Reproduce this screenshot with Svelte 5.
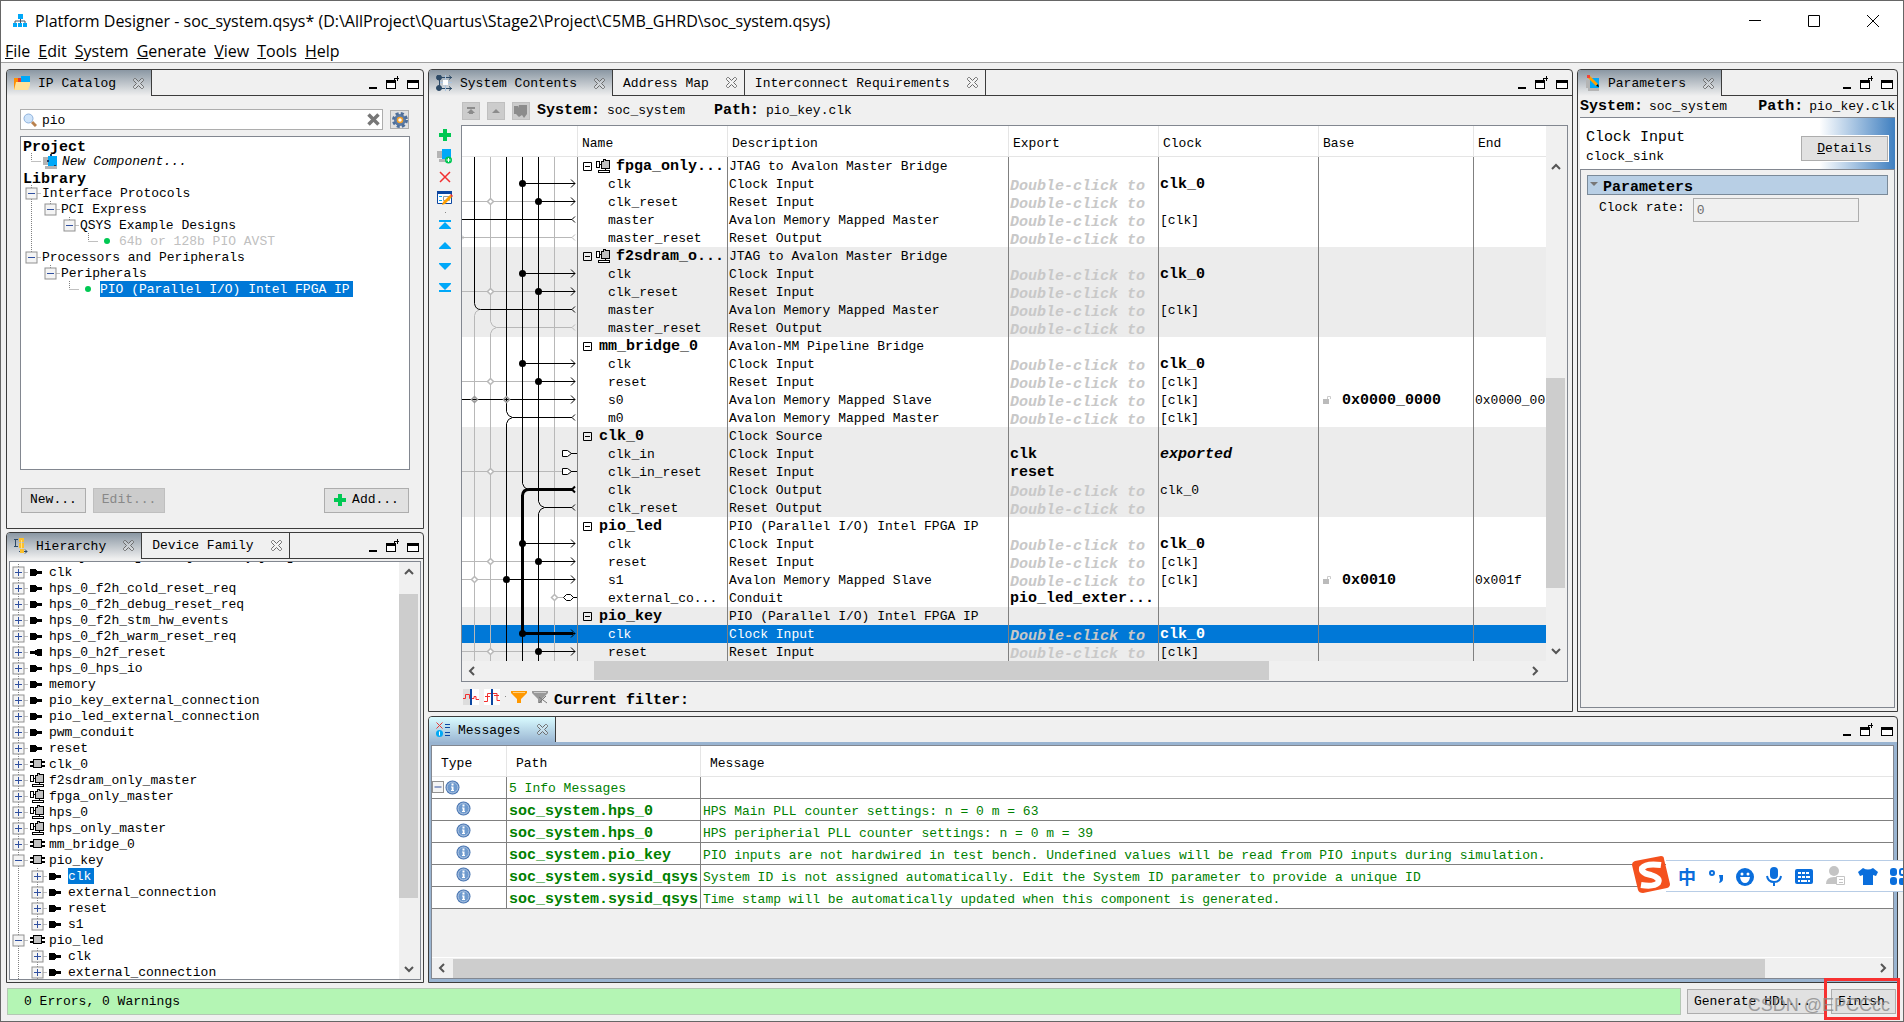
<script>
  const menus = ["File", "Edit", "System", "Generate", "View", "Tools", "Help"];

  let search = $state("pio");
  let clockRate = $state("0");

  // depth: nesting, toggle: + / - / none, last: end of its branch, through: depths whose guide runs on
  const catalog = [
    { label: "Project", heading: true },
    { label: "New Component...", depth: 0, icon: "component", last: true, italic: true },
    { label: "Library", heading: true },
    { label: "Interface Protocols", depth: 0, toggle: "-" },
    { label: "PCI Express", depth: 1, toggle: "-", last: true, through: [0] },
    { label: "QSYS Example Designs", depth: 2, toggle: "-", last: true, through: [0] },
    { label: "64b or 128b PIO AVST", depth: 3, icon: "dot", last: true, through: [0], dim: true },
    { label: "Processors and Peripherals", depth: 0, toggle: "-", last: true },
    { label: "Peripherals", depth: 1, toggle: "-", last: true },
    { label: "PIO (Parallel I/O) Intel FPGA IP", depth: 2, icon: "dot", last: true, selected: true },
  ];

  const node = (label, icon = "port", depth = 0, toggle = "+") => ({
    label,
    icon,
    depth,
    toggle,
    through: depth ? [0] : [],
  });

  const hierarchy = [
    node("clk"),
    node("hps_0_f2h_cold_reset_req"),
    node("hps_0_f2h_debug_reset_req"),
    node("hps_0_f2h_stm_hw_events"),
    node("hps_0_f2h_warm_reset_req"),
    node("hps_0_h2f_reset", "portout"),
    node("hps_0_hps_io"),
    node("memory"),
    node("pio_key_external_connection"),
    node("pio_led_external_connection"),
    node("pwm_conduit"),
    node("reset"),
    node("clk_0", "chip"),
    node("f2sdram_only_master", "subsystem"),
    node("fpga_only_master", "subsystem"),
    node("hps_0", "subsystem"),
    node("hps_only_master", "subsystem"),
    node("mm_bridge_0", "chip"),
    node("pio_key", "chip", 0, "-"),
    { ...node("clk", "port", 1), selected: true },
    node("external_connection", "port", 1),
    node("reset", "port", 1),
    { ...node("s1", "port", 1), last: true },
    node("pio_led", "chip", 0, "-"),
    node("clk", "port", 1),
    node("external_connection", "port", 1),
  ];

  const D = "Double-click to";
  const modules = [
    {
      name: "fpga_only...",
      desc: "JTAG to Avalon Master Bridge",
      sub: true,
      ports: [
        ["clk", "Clock Input", D, "clk_0"],
        ["clk_reset", "Reset Input", D],
        ["master", "Avalon Memory Mapped Master", D, "[clk]"],
        ["master_reset", "Reset Output", D],
      ],
    },
    {
      name: "f2sdram_o...",
      desc: "JTAG to Avalon Master Bridge",
      sub: true,
      ports: [
        ["clk", "Clock Input", D, "clk_0"],
        ["clk_reset", "Reset Input", D],
        ["master", "Avalon Memory Mapped Master", D, "[clk]"],
        ["master_reset", "Reset Output", D],
      ],
    },
    {
      name: "mm_bridge_0",
      desc: "Avalon-MM Pipeline Bridge",
      ports: [
        ["clk", "Clock Input", D, "clk_0"],
        ["reset", "Reset Input", D, "[clk]"],
        ["s0", "Avalon Memory Mapped Slave", D, "[clk]", "0x0000_0000", "0x0000_00"],
        ["m0", "Avalon Memory Mapped Master", D, "[clk]"],
      ],
    },
    {
      name: "clk_0",
      desc: "Clock Source",
      ports: [
        ["clk_in", "Clock Input", "clk", "exported"],
        ["clk_in_reset", "Reset Input", "reset"],
        ["clk", "Clock Output", D, "clk_0", "", "", true],
        ["clk_reset", "Reset Output", D],
      ],
    },
    {
      name: "pio_led",
      desc: "PIO (Parallel I/O) Intel FPGA IP",
      ports: [
        ["clk", "Clock Input", D, "clk_0"],
        ["reset", "Reset Input", D, "[clk]"],
        ["s1", "Avalon Memory Mapped Slave", D, "[clk]", "0x0010", "0x001f"],
        ["external_co...", "Conduit", "pio_led_exter..."],
      ],
    },
    {
      name: "pio_key",
      desc: "PIO (Parallel I/O) Intel FPGA IP",
      ports: [
        ["clk", "Clock Input", D, "clk_0"],
        ["reset", "Reset Input", D, "[clk]"],
      ],
    },
  ];

  const messages = [
    ["soc_system.hps_0", "HPS Main PLL counter settings: n = 0 m = 63"],
    ["soc_system.hps_0", "HPS peripherial PLL counter settings: n = 0 m = 39"],
    ["soc_system.pio_key", "PIO inputs are not hardwired in test bench. Undefined values will be read from PIO inputs during simulation."],
    ["soc_system.sysid_qsys", "System ID is not assigned automatically. Edit the System ID parameter to provide a unique ID"],
    ["soc_system.sysid_qsys", "Time stamp will be automatically updated when this component is generated."],
  ];

  // y of the wire in table row i
  const wy = (i) => i * 18 + 8.5;
  const clkRows = [1, 6, 11, 21];
  const resetRows = [2, 7, 12, 22, 27];
</script>

{#snippet icon(name)}
  {#if name === "component"}
    <svg width="16" height="15" viewBox="0 0 16 15">
      <path d="M0 3h6v8H0z" fill="#b4b4b4" />
      <path d="M2 12h12v3H2z" fill="#b4b4b4" />
      <path d="M5 2h2V0h2v2h5v10H5z" fill="#00a8f8" />
      <path d="M7 0h2v2H7zM4 6h2v2H4zM11 11h2v1h-2z" fill="#1a3a66" />
    </svg>
  {:else if name === "dot"}
    <svg width="16" height="16" viewBox="0 0 16 16"><circle cx="7" cy="8" r="3" fill="#00c853" /></svg>
  {:else if name === "port"}
    <svg width="16" height="10" viewBox="0 0 16 10" shape-rendering="crispEdges"><path d="M0 2h5l1 1h1v1h5v3H7v1H6L5 9H0z" /></svg>
  {:else if name === "portout"}
    <svg width="16" height="10" viewBox="0 0 16 10" shape-rendering="crispEdges"><path d="M12 2H7L6 3H5v1H0v3h5v1h1l1 1h5z" /></svg>
  {:else if name === "chip"}
    <svg width="16" height="10" viewBox="0 0 16 10" shape-rendering="crispEdges">
      <path d="M0 2h15v2H0zM0 6h15v2H0z" />
      <rect x="3.500" y="0.500" width="8" height="8" fill="#c0c0c0" stroke="#000" />
    </svg>
  {:else if name === "subsystem"}
    <svg width="16" height="14" viewBox="0 0 16 14" shape-rendering="crispEdges" stroke="#000" fill="#c0c0c0">
      <path d="M.5 2.500h3v6h-3zM2.500 11.500h11v2h-11z" fill="#fff" />
      <path d="M5.500 2.500h2v-2h2v1h4v8h-8z" />
      <path d="M3 5.500h2M9.500 10v2" />
    </svg>
  {:else if name === "info"}
    <svg width="15" height="15" viewBox="0 0 15 15">
      <circle cx="7.500" cy="7.500" r="7" fill="#4472b0" />
      <circle cx="7.500" cy="7.500" r="5.500" fill="#6e9ace" stroke="#b6cbe6" />
      <path d="M6.500 3.500h2v2h-2zM6 6.500h2.500V10H9v1H6v-1h.7V7.500H6z" fill="#fff" />
    </svg>
  {:else if name === "plus"}
    <svg width="12" height="12" viewBox="0 0 12 12"><path d="M4 0h4v4h4v4H8v4H4V8H0V4h4z" fill="#00c853" /></svg>
  {:else if name === "close"}
    <svg width="11" height="11" viewBox="0 0 11 11" fill="#fff" fill-opacity="0.2" stroke="#6a6a6a">
      <path d="M1.500.5h1l3 3 3-3h1l1 1v1l-3 3 3 3v1l-1 1h-1l-3-3-3 3h-1l-1-1v-1l3-3-3-3v-1z" />
    </svg>
  {/if}
{/snippet}

{#snippet expander(kind)}
  <rect x="-5.500" y="-5.500" width="11" height="11" fill="#f4f4f4" stroke="#919191" stroke-dasharray="none" />
  <path d={kind === "+" ? "M-3.500 0h7M0-3.500v7" : "M-3.500 0h7"} stroke="#3050a0" stroke-dasharray="none" />
{/snippet}

{#snippet tree(rows, base)}
  {#each rows as row}
    {#if row.heading}
      <li class="row heading">{row.label}</li>
    {:else}
      {@const x = base + row.depth * 19 + 0.5}
      <li class="row">
        <svg class="guide" width={x + 10.5} height="16" stroke="#808080" stroke-dasharray="1 1">
          {#each row.through ?? [] as t}
            <path d="M{base + t * 19 + 0.5} 0v16" />
          {/each}
          <path d="M{x} 0v{row.last ? 8 : 16}M{x} 8.500h10" />
          {#if row.toggle}
            <g transform="translate({x} 8.500)">{@render expander(row.toggle)}</g>
          {/if}
        </svg>
        {#if row.icon}<span class="node-icon">{@render icon(row.icon)}</span>{/if}
        <span class="label" class:italic={row.italic} class:dim={row.dim} class:selected={row.selected}>{row.label}</span>
      </li>
    {/if}
  {/each}
{/snippet}

{#snippet tab(title, active, art)}
  <div class="tab" class:active>
    {#if art}{@render art()}{/if}
    <span>{title}</span>
    <button class="bare" aria-label="Close {title}">{@render icon("close")}</button>
  </div>
{/snippet}

{#snippet controls()}
  <div class="controls">
    <button class="bare" aria-label="Minimize">
      <svg width="10" height="14"><path d="M1 11h8v2H1z" /></svg>
    </button>
    <button class="bare" aria-label="Detach">
      <svg width="14" height="14" fill="none" stroke="#000" shape-rendering="crispEdges">
        <path d="M.5 4.500h9v8h-9z" fill="#fff" /><path d="M0 5h10" stroke-width="3" />
        <path d="M8.500 6V2.500H13M11.500 0v5" />
      </svg>
    </button>
    <button class="bare" aria-label="Maximize">
      <svg width="12" height="14" fill="none" stroke="#000" shape-rendering="crispEdges">
        <path d="M.5 4.500h11v8H.5z" fill="#fff" /><path d="M0 5h12" stroke-width="3" />
      </svg>
    </button>
  </div>
{/snippet}

{#snippet chevron(d)}
  <button class="bare arrow" aria-label="Scroll">
    <svg width="12" height="12" fill="none" stroke="#555" stroke-width="2"><path {d} /></svg>
  </button>
{/snippet}

{#snippet catalogArt()}
  <svg width="17" height="16" viewBox="0 0 17 16">
    <path d="M0 3h5v3h3v9H0z" fill="#ff8f00" /><path d="M4 3h4v4H4z" fill="#e53935" />
    <path d="M7 1h9v6H7z" fill="#00a8f8" /><path d="M2 7h14v3l-2 5H0z" fill="#ffe29a" />
  </svg>
{/snippet}

{#snippet hierarchyArt()}
  <svg width="15" height="16" viewBox="0 0 15 16" fill="none" stroke="#2d4a66">
    <path d="M0 1.500h4M0 8.500h4M1.500 2v6M5 13.500h8M11 11.500l2 2-2 2" />
    <path d="M5 0h5v4H5zM5 5h5v5H5zM6 11h4v4H6z" fill="#fbc02d" stroke="none" />
    <path d="M7.500 2v9" stroke="#ffe082" />
  </svg>
{/snippet}

{#snippet contentsArt()}
  <svg width="17" height="16" viewBox="0 0 17 16" fill="none" stroke="#2d4a66">
    <path d="M3.500 3v10M3 2.500h13M3 13.500h13M13 .5l2.500 2-2.500 2M13 11.500l2.500 2-2.500 2" />
    <path d="M9.500 0v16M4 7.500h12" stroke="#aac4e0" /><path d="M7 5h5v5H7z" fill="#fff" stroke="none" />
    <circle cx="3" cy="2.500" r="2.500" fill="#2d4a66" /><circle cx="3" cy="13" r="2.500" fill="#2d4a66" />
  </svg>
{/snippet}

{#snippet parametersArt()}
  <svg width="16" height="16" viewBox="0 0 16 16">
    <path d="M1 5h5v8H1zM3 13h11v3H3z" fill="#b4b4b4" /><path d="M5 3h9v10H5z" fill="#00a8f8" />
    <path d="M5 1l8 8-2 2-8-8z" fill="#ffa000" /><path d="M2 0h3v3H2z" fill="#f44336" /><path d="M13 9l1 3-3-1z" />
  </svg>
{/snippet}

{#snippet messagesArt()}
  <svg width="15" height="15" viewBox="0 0 15 15" fill="none">
    <path d="M.5.5l6 6M6.500.5l-6 6" stroke="#e53935" /><circle cx="3.500" cy="11.500" r="3.500" fill="#03a9f4" />
    <path d="M3.500 9.500v4" stroke="#fff" /><path d="M9 2.500h5M9 5.500h5M9 10.500h5M9 13.500h5" stroke="#0d47a1" />
  </svg>
{/snippet}

{#snippet diamond(x, i)}
  <path d="M{x - 3} {wy(i)}l3-3 3 3-3 3z" fill="#fff" stroke="#b8b8b8" stroke-width="1.500" />
{/snippet}

<main>
  <header class="titlebar">
    <svg width="14" height="13" viewBox="0 0 14 13" fill="#00a8f8">
      <path d="M5 0h5v5H5zM0 9h4v4H0zM5 9h4v4H5zM10 9h4v4h-4z" />
      <path d="M7.500 5v4M2 9V7h10v2" fill="none" stroke="#456" />
    </svg>
    <h1>Platform Designer - soc_system.qsys* (D:\AllProject\Quartus\Stage2\Project\C5MB_GHRD\soc_system.qsys)</h1>
    <div class="window-buttons">
      <button class="bare" aria-label="Minimize window"><svg width="12" height="12" stroke="#000"><path d="M0 5.500h12" /></svg></button>
      <button class="bare" aria-label="Maximize window"><svg width="12" height="12" fill="none" stroke="#000"><path d="M.5.5h11v11H.5z" /></svg></button>
      <button class="bare" aria-label="Close window"><svg width="12" height="12" stroke="#000"><path d="M0 0l12 12M12 0L0 12" /></svg></button>
    </div>
  </header>

  <nav>
    {#each menus as menu}
      <button class="bare"><u>{menu[0]}</u>{menu.slice(1)}</button>
    {/each}
  </nav>

  <div class="workspace">
    <div class="side">
      <section class="panel catalog">
        <div class="tabs">
          {@render tab("IP Catalog", true, catalogArt)}
          {@render controls()}
        </div>
        <div class="search">
          <label>
            <svg width="14" height="14" viewBox="0 0 14 14">
              <path d="M9 9l4 4" stroke="#b9814e" stroke-width="3" /><circle cx="5.500" cy="5.500" r="4.500" fill="#cfe4fa" stroke="#8fb2dc" />
            </svg>
            <input aria-label="Search" bind:value={search} />
            <button class="bare" aria-label="Clear" onclick={() => (search = "")}>
              <svg width="13" height="13"><path d="M1.500 1.500l10 10M11.500 1.500l-10 10" stroke="#777" stroke-width="3.500" /></svg>
            </button>
          </label>
          <button class="gear" aria-label="Settings">
            <svg width="16" height="16" viewBox="-8 -8 16 16">
              <circle r="6" fill="#5b7ba5" /><circle r="6.500" fill="none" stroke="#4f6f9a" stroke-width="3" stroke-dasharray="3 2.100" />
              <circle r="2.500" fill="#fff" stroke="#f2a02c" stroke-width="1.500" />
            </svg>
          </button>
        </div>
        <ul class="tree">{@render tree(catalog, 10)}</ul>
        <div class="actions">
          <button>New...</button>
          <button disabled>Edit...</button>
          <button class="add">{@render icon("plus")}Add...</button>
        </div>
      </section>

      <section class="panel hierarchy">
        <div class="tabs">
          {@render tab("Hierarchy", true, hierarchyArt)}
          {@render tab("Device Family", false)}
          {@render controls()}
        </div>
        <div class="frame">
          <ul class="tree">
            <li class="row root">soc_system [soc_system.qsys*]</li>
            {@render tree(hierarchy, 8)}
          </ul>
          <div class="vbar">
            {@render chevron("M2 8l4-4 4 4")}
            <div class="vtrack"><i style="height: 86%"></i></div>
            {@render chevron("M2 4l4 4 4-4")}
          </div>
        </div>
      </section>
    </div>

    <div class="center">
      <div class="upper">
        <section class="panel contents">
          <div class="tabs">
            {@render tab("System Contents", true, contentsArt)}
            {@render tab("Address Map", false)}
            {@render tab("Interconnect Requirements", false)}
            {@render controls()}
          </div>
          <div class="pathbar">
            <button disabled aria-label="Top"><svg width="8" height="8" fill="#8c8c8c"><path d="M0 0h8v2H0zM4 2l4 4H6v1H2V6H0z" /></svg></button>
            <button disabled aria-label="Up"><svg width="8" height="8" fill="#8c8c8c"><path d="M4 2l4 4H0z" /></svg></button>
            <button disabled aria-label="Open subsystem"><svg width="14" height="14" fill="#8c8c8c"><path d="M0 2h4v8H0zM5 1h8v9l-3 4-2-3-3 2-3-3z" /></svg></button>
            <b>System:</b><span>soc_system</span><b class="path">Path:</b><span>pio_key.clk</span>
          </div>
          <div class="editor">
            <div class="toolbar">
              <button class="bare" aria-label="Add">{@render icon("plus")}</button>
              <button class="bare" aria-label="Add component">
                <svg width="16" height="16" viewBox="0 0 16 16">
                  <path d="M0 3h5v7H0zM2 11h9v3H2z" fill="#b4b4b4" /><path d="M5 1h9v10H5z" fill="#00a8f8" />
                  <circle cx="11.500" cy="12" r="3.500" fill="#00c853" /><path d="M9.500 12h4M11.500 10v4" stroke="#fff" />
                </svg>
              </button>
              <button class="bare" aria-label="Remove"><svg width="12" height="12" stroke="#f22f2f" stroke-width="1.500"><path d="M1 1l10 10M11 1L1 11" /></svg></button>
              <button class="bare" aria-label="Edit">
                <svg width="16" height="14" viewBox="0 0 16 14">
                  <path d="M.5.5h14v12H.5z" fill="#fff" stroke="#0d47a1" /><path d="M0 0h15v3H0z" fill="#0d47a1" />
                  <path d="M2 5.500h3M2 9.500h3" stroke="#03a9f4" /><path d="M6.500 5.500h6v4h-6z" fill="none" stroke="#999" />
                  <path d="M13 4l2 2-7 7-3 1 1-3z" fill="#ffa000" /><path d="M13 4l2 2 1-1-2-2z" fill="#f22f2f" />
                </svg>
              </button>
              <span class="grip"></span>
              <button class="bare" aria-label="Move to top"><svg width="12" height="10" fill="#00a8f8"><path d="M0 0h12v2H0zM6 2l6 6v1H0V8z" /></svg></button>
              <button class="bare" aria-label="Move up"><svg width="12" height="10" fill="#00a8f8"><path d="M6 1l6 6v1H0V7z" /></svg></button>
              <button class="bare" aria-label="Move down"><svg width="12" height="10" fill="#00a8f8"><path d="M6 8l6-6V1H0v1z" /></svg></button>
              <button class="bare" aria-label="Move to bottom"><svg width="12" height="10" fill="#00a8f8"><path d="M0 7h12v2H0zM6 7l6-6V0H0v1z" /></svg></button>
            </div>
            <div class="grid">
              <div class="view">
                <div class="scroll">
                  <table>
                    <colgroup><col class="c-wire" /><col class="c-name" /><col class="c-desc" /><col class="c-name" /><col class="c-clock" /><col class="c-base" /><col /></colgroup>
                    <thead>
                      <tr><th></th><th>Name</th><th>Description</th><th>Export</th><th>Clock</th><th>Base</th><th>End</th></tr>
                    </thead>
                    {#each modules as mod, m}
                      <tbody>
                        <tr>
                          <td></td>
                          <td class="module">
                            <div>
                              <svg width="9" height="9" fill="none" stroke="#000"><path d="M.5.5h8v8h-8zM2 4.500h5" /></svg>
                              {#if mod.sub}{@render icon("subsystem")}{/if}
                              <b>{mod.name}</b>
                            </div>
                          </td>
                          <td>{mod.desc}</td><td></td><td></td><td></td><td></td>
                        </tr>
                        {#each mod.ports as [name, desc, exported, clock, base, end, plain], p}
                          <tr class:current={m === 5 && p === 0}>
                            <td></td>
                            <td class="port">{name}</td>
                            <td>{desc}</td>
                            <td class="strong" class:hint={exported === D}>{exported}</td>
                            <td class:strong={clock && clock[0] !== "[" && !plain} class:italic={clock === "exported"}>{clock ?? ""}</td>
                            <td class="base">
                              {#if base}
                                <svg width="8" height="9"><path d="M0 4h6v5H0z" fill="#bbb" /><path d="M4.500 4V1.500h3V4" fill="none" stroke="#ccc" /></svg><b>{base}</b>
                              {/if}
                            </td>
                            <td>{end ?? ""}</td>
                          </tr>
                        {/each}
                      </tbody>
                    {/each}
                  </table>
                  <svg class="wires" width="115" height="504" fill="none" stroke="#000">
                    <g stroke="#b8b8b8">
                      <path d="M12.500 504V{wy(8) + 6}q0-4 5-6M28.500 0V{wy(9) - 6}q1 5 6 6H110M28.500 504V{wy(9) + 6}q1-5 6-6M92.500 0v504" />
                      {#each [...resetRows, 17] as i}<path d="M0 {wy(i)}h{i === 17 ? 100 : 76}" />{/each}
                      <path d="M0 {wy(4)}h110M0 {wy(23)}h44M93 {wy(24)}h9" />
                      <path d="M113 {wy(4) - 3}l-3 3 3 3M113 {wy(9) - 3}l-3 3 3 3M0 {wy(4) - 2}l2 2-2 2" />
                    </g>
                    <path d="M12.500 0V{wy(8) - 6}q1 6 6 6H110M0 {wy(3)}h110" />
                    <path d="M44.500 0V{wy(14) - 6}q1 5 6 6H110M44.500 504V{wy(14) + 6}q1-5 6-6" />
                    <path d="M60.500 0V{wy(18) - 6}q1 5 6 6M60.500 {wy(26)}V504" />
                    <path d="M76.500 0V{wy(19) - 6}q1 5 6 6H110M76.500 504V{wy(19) + 6}q1-5 6-6" />
                    <path d="M110 {wy(18)}H67q-6 0-6.500 6V{wy(26)}H111" stroke-width="3" />
                    {#each [3, 8, 14, 18, 19] as i}
                      <path d="M113 {wy(i) - 3}l-3 3 3 3" stroke-width={i === 18 ? 2 : 1} />
                    {/each}
                    {#each [...clkRows, ...resetRows, 13, 23, 26] as i}
                      <path d="M{i === 13 ? 0 : i === 23 ? 44 : resetRows.includes(i) ? 76 : 60} {wy(i)}H113M109 {wy(i) - 4}l4 4-4 4" />
                    {/each}
                    {#each resetRows as i}
                      {@render diamond(28.5, i)}
                      <circle cx="76.500" cy={wy(i)} r="3.500" fill="#000" stroke="none" />
                    {/each}
                    {#each [...clkRows, 26] as i}<circle cx="60.500" cy={wy(i)} r="3.500" fill="#000" stroke="none" />{/each}
                    <circle cx="44.500" cy={wy(23)} r="3.500" fill="#000" stroke="none" />
                    <path d="M9.500 {wy(13)}l3-3 3 3-3 3zM41.500 {wy(13)}l3-3 3 3-3 3z" stroke="#999" stroke-width="1.500" />
                    {@render diamond(28.5, 17)}
                    {@render diamond(12.5, 23)}
                    {@render diamond(92.5, 24)}
                    <path d="M100.500 {wy(16) - 3}h5l4 3-4 3h-5zM109 {wy(16)}h6M100.500 {wy(17) - 3}h5l4 3-4 3h-5zM109 {wy(17)}h6" fill="#fff" />
                    <path d="M101.500 {wy(24)}l3-3h4l3 3-3 3h-4zM111 {wy(24)}h4" fill="#fff" />
                  </svg>
                </div>
                <div class="vbar">
                  <span class="corner"></span>
                  {@render chevron("M2 8l4-4 4 4")}
                  <div class="vtrack low"><i style="height: 51%"></i></div>
                  {@render chevron("M2 4l4 4 4-4")}
                </div>
              </div>
              <div class="hbar inset">
                {@render chevron("M8 2L4 6l4 4")}
                <div class="htrack offset"><i style="width: 73%"></i></div>
                {@render chevron("M4 2l4 4-4 4")}
              </div>
            </div>
          </div>
          <div class="filter">
            <button class="bare" aria-label="Clock domains"><svg width="16" height="16" fill="none" stroke="#f22f2f"><path d="M0 0h8v16H0z" fill="#ddd" stroke="none" /><path d="M8 0h8v16H8z" fill="#fff" stroke="none" /><path d="M0 9.500h2.500v-4h4v4H11v-2h2v3h3" /><path d="M8 0v16" stroke="#0d47a1" stroke-width="2" /></svg></button>
            <button class="bare" aria-label="Reset domains"><svg width="16" height="16" fill="none" stroke="#f22f2f"><path d="M0 0h16v16H0z" fill="#fff" stroke="none" /><path d="M0 12.500h3.500v-8H13v7h3M1 7.500h5M10 6.500h5" /><path d="M8 0v16" stroke="#0d47a1" stroke-width="2" /></svg></button>
            <span class="grip"></span>
            <button class="bare" aria-label="Filter"><svg width="16" height="14"><path d="M0 1h16v2l-6 6v4H6V9L0 3z" fill="#ff9800" /><path d="M2 2.500h12" stroke="#ffd180" /></svg></button>
            <button class="bare" aria-label="Clear filter"><svg width="16" height="14"><path d="M0 1h16v2l-6 6v4H6V9L0 3z" fill="#999" /><path d="M2 2.500h12" stroke="#ccc" /><path d="M7 7l8 6M14 6l-7 7" stroke="#777" /></svg></button>
            <b>Current filter:</b>
          </div>
        </section>

        <section class="panel parameters">
          <div class="tabs">
            {@render tab("Parameters", true, parametersArt)}
            {@render controls()}
          </div>
          <div class="crumbs"><b>System:</b><span>soc_system</span><b class="path">Path:</b><span>pio_key.clk</span></div>
          <div class="banner">
            <div><h2>Clock Input</h2><p>clock_sink</p></div>
            <button><u>D</u>etails</button>
          </div>
          <div class="form">
            <h3><svg width="8" height="5"><path d="M0 0h8L4 4z" fill="#777" /></svg>Parameters</h3>
            <div class="field">
              <label for="rate">Clock rate:</label>
              <input id="rate" bind:value={clockRate} disabled />
            </div>
          </div>
        </section>
      </div>

      <section class="panel messages">
        <div class="tabs">
          {@render tab("Messages", true, messagesArt)}
          {@render controls()}
        </div>
        <div class="log">
          <table>
            <colgroup><col class="c-type" /><col class="c-path" /><col /></colgroup>
            <thead><tr><th>Type</th><th>Path</th><th>Message</th></tr></thead>
            <tbody>
              <tr class="summary">
                <td>
                  <div>
                    <svg width="12" height="12"><g transform="translate(6 6)">{@render expander("-")}</g></svg>
                    {@render icon("info")}
                  </div>
                </td>
                <td>5 Info Messages</td>
                <td></td>
              </tr>
              {#each messages as [path, text]}
                <tr><td>{@render icon("info")}</td><td><b>{path}</b></td><td>{text}</td></tr>
              {/each}
            </tbody>
          </table>
          <div class="hbar">
            {@render chevron("M8 2L4 6l4 4")}
            <div class="htrack"><i style="width: 93%"></i></div>
            {@render chevron("M4 2l4 4-4 4")}
          </div>
        </div>
      </section>
    </div>
  </div>

  <footer>
    <output>0 Errors, 0 Warnings</output>
    <button>Generate HDL...</button>
    <button class="finish">Finish</button>
  </footer>

  <div class="ime">
    <svg class="sogou" width="40" height="40" viewBox="0 0 40 40">
      <path d="M4 6L30 1q3 0 3 3l6 25q0 3-3 4l-24 5q-4 0-5-3L1 10q0-3 3-4z" fill="#f4511e" />
      <path d="M30 10Q15 8 11 13q-1 5 9 7 10 3 7 8-4 4-17 2" fill="none" stroke="#fff" stroke-width="6" />
    </svg>
    <span>中</span>
    <svg width="16" height="20" fill="none" stroke="#0a6edc" stroke-width="2"><circle cx="4" cy="7" r="2" /><path d="M11 9h4v4q0 3-4 4l1-3z" fill="#0a6edc" stroke="none" /></svg>
    <svg width="18" height="20"><circle cx="9" cy="11" r="9" fill="#0a6edc" /><circle cx="6" cy="8" r="1.500" fill="#fff" /><circle cx="12" cy="8" r="1.500" fill="#fff" /><path d="M4 11h10q-1 6-5 6t-5-6z" fill="#fff" /></svg>
    <svg width="16" height="20" fill="none" stroke="#0a6edc" stroke-width="2"><rect x="4" y="1" width="8" height="12" rx="4" fill="#0a6edc" stroke="none" /><path d="M1 10q1 6 7 6t7-6M8 16v4" /></svg>
    <svg width="20" height="20"><rect x="1" y="3" width="18" height="15" rx="2" fill="#0a6edc" /><path d="M4 7h3m1 0h3m1 0h3M4 11h3m1 0h3m1 0h4M4 15h2m1 0h6m1 0h2" stroke="#fff" stroke-width="2" /></svg>
    <svg width="20" height="20" fill="#c4c4c4"><circle cx="8" cy="5" r="5" /><path d="M0 18q0-7 8-7h2v7z" /><path d="M10.500 10.500h8v8h-8zM13 13.500h4M13 16.500h4" fill="#fff" stroke="#c4c4c4" /></svg>
    <svg width="20" height="20" fill="#0a6edc"><path d="M5 2q5 3 10 0l5 4-2 4-3-1v10H5V9l-3 1-2-4z" /></svg>
    <svg width="13" height="20" fill="#0a6edc"><rect x="0" y="2" width="7" height="8" rx="3" /><rect x="0" y="11" width="7" height="8" rx="3" /><rect x="9" y="12" width="8" height="7" rx="2" /><rect x="10" y="3" width="7" height="6" rx="2" fill="none" stroke="#0a6edc" stroke-width="2" /></svg>
  </div>
  <div class="callout"></div>
  <div class="watermark">CSDN @EPCCcc</div>
</main>

<style>
  :global(body) {
    margin: 0;
  }

  main {
    position: relative;
    box-sizing: border-box;
    height: 100vh;
    display: flex;
    flex-direction: column;
    overflow: hidden;
    background: #f0f0f0;
    border: 1px solid #666;
    color: #000;
    font: 13px/16px "Liberation Mono", monospace;
    white-space: nowrap;
  }

  svg {
    display: block;
    flex: none;
  }

  ul,
  h1,
  h2,
  h3,
  p {
    margin: 0;
    padding: 0;
    list-style: none;
    font-weight: normal;
  }

  b {
    font-size: 15px;
  }

  button {
    box-sizing: border-box;
    display: flex;
    align-items: center;
    justify-content: center;
    height: 25px;
    padding: 0 8px;
    border: 1px solid #adadad;
    background: #e1e1e1;
    color: inherit;
    font: inherit;
  }

  button:disabled {
    background: #ccc;
    border-color: #bfbfbf;
    color: #888;
  }

  .bare {
    height: auto;
    padding: 0;
    border: 0;
    background: none;
  }

  .titlebar {
    display: flex;
    align-items: center;
    flex: none;
    height: 39px;
    padding-left: 12px;
    gap: 8px;
    background: #fff;
  }

  h1 {
    flex: 1;
    font: 16px/20px "Open Sans", sans-serif;
  }

  .window-buttons {
    display: flex;
    gap: 47px;
    padding-right: 24px;
  }

  nav {
    display: flex;
    flex: none;
    gap: 8px;
    height: 22px;
    padding-left: 4px;
    background: #fff;
    border-bottom: 1px solid #a0a0a0;
    font: 16px/18px "Open Sans", sans-serif;
  }

  nav button {
    height: 20px;
  }

  .workspace {
    flex: 1;
    min-height: 0;
    display: flex;
    gap: 4px;
    padding: 6px 5px 0;
  }

  .side {
    flex: none;
    width: 418px;
    display: flex;
    flex-direction: column;
    gap: 3px;
  }

  .center {
    flex: 1;
    min-width: 0;
    display: flex;
    flex-direction: column;
    gap: 4px;
  }

  .upper {
    flex: 644 0 0;
    min-height: 0;
    display: flex;
    gap: 4px;
  }

  .panel {
    box-sizing: border-box;
    display: flex;
    flex-direction: column;
    min-width: 0;
    min-height: 0;
    overflow: hidden;
    border: 1px solid #3c3c3c;
    border-radius: 4px 4px 0 0;
  }

  .catalog {
    flex: 460 0 0;
  }

  .hierarchy {
    flex: 451 0 0;
  }

  .contents {
    flex: 1;
  }

  .parameters {
    flex: none;
    width: 321px;
  }

  .messages {
    flex: 266 0 0;
  }

  .tabs {
    display: flex;
    flex: none;
    height: 26px;
  }

  .tab {
    box-sizing: border-box;
    display: flex;
    align-items: center;
    padding: 0 7px 0 10px;
    border-right: 1px solid #3c3c3c;
    border-bottom: 1px solid #3c3c3c;
  }

  .tab.active {
    padding-left: 7px;
    border-bottom: 0;
    background: linear-gradient(#8a97a3, #f0f0f0);
  }

  .tab span {
    padding-top: 2px;
  }

  .tab.active span {
    margin-left: 7px;
  }

  .tab button {
    margin-left: 17px;
  }

  .messages .tab.active {
    background: linear-gradient(#d9fbff, #99b4d1);
  }

  .controls {
    flex: 1;
    display: flex;
    align-items: center;
    justify-content: flex-end;
    gap: 8px;
    padding: 1px 4px 0 0;
    border-bottom: 1px solid #3c3c3c;
  }

  .controls button + button + button {
    margin-left: -1px;
  }

  .search {
    display: flex;
    gap: 7px;
    padding: 13px 14px 6px 13px;
  }

  .search label {
    flex: 1;
    display: flex;
    align-items: center;
    gap: 5px;
    height: 19px;
    padding: 0 2px;
    background: #fff;
    border: 1px solid #adadad;
  }

  .search input {
    flex: 1;
    min-width: 0;
    padding: 2px 0 0;
    border: 0;
    outline: 0;
    background: none;
    font: inherit;
  }

  .gear {
    width: 19px;
    height: 19px;
    padding: 0;
    margin-top: 1px;
  }

  .tree {
    flex: 1;
    min-width: 0;
    min-height: 0;
    overflow: hidden;
    background: #fff;
  }

  .catalog .tree {
    margin: 0 13px;
    border: 1px solid #828790;
  }

  .row {
    display: flex;
    align-items: center;
    height: 16px;
  }

  .row.heading {
    padding: 6px 0 0 2px;
    height: 10px;
    font-size: 15px;
    font-weight: bold;
  }

  .node-icon {
    box-sizing: border-box;
    width: 20px;
    display: flex;
    padding-left: 1px;
  }

  .label {
    padding-top: 2px;
    line-height: 14px;
  }

  .label.italic {
    font-style: italic;
  }

  .label.dim {
    color: #c0c0c0;
  }

  .label.selected {
    background: #0078d7;
    color: #fff;
    padding: 2px 3px 0 0;
  }

  .actions {
    display: flex;
    gap: 7px;
    padding: 18px 14px 15px;
  }

  .add {
    width: 85px;
    margin-left: auto;
    gap: 6px;
  }

  .frame {
    flex: 1;
    min-height: 0;
    display: flex;
    margin: 2px;
    border: 1px solid #828790;
    background: #fff;
  }

  .row.root {
    height: 2px;
    align-items: flex-end;
    overflow: hidden;
    padding-left: 24px;
    font-size: 15px;
    font-weight: bold;
    line-height: 14px;
  }

  .vbar {
    flex: none;
    width: 21px;
    display: flex;
    flex-direction: column;
    background: #f0f0f0;
  }

  .corner {
    height: 31px;
  }

  .arrow {
    width: 20px;
    height: 20px;
  }

  .vtrack {
    flex: 1;
    padding: 12px 0;
  }

  .vtrack.low {
    display: flex;
    align-items: flex-end;
    padding: 0 0 53px;
  }

  .vtrack i {
    display: block;
    width: 19px;
    background: #cdcdcd;
  }

  .hbar {
    display: flex;
    align-items: center;
    flex: none;
    height: 20px;
    background: #f0f0f0;
  }

  .inset {
    padding-right: 22px;
  }

  .htrack {
    flex: 1;
  }

  .offset {
    padding: 0 6px 0 112px;
  }

  .htrack i {
    display: block;
    height: 19px;
    background: #cdcdcd;
  }

  .pathbar {
    display: flex;
    align-items: center;
    gap: 7px;
    height: 29px;
    padding-left: 33px;
  }

  .pathbar button {
    width: 18px;
    height: 18px;
    padding: 0;
  }

  .path {
    margin-left: 22px;
  }

  .editor {
    flex: 1;
    min-height: 0;
    display: flex;
  }

  .toolbar {
    width: 32px;
    display: flex;
    flex-direction: column;
    align-items: center;
    gap: 7px;
    padding-top: 3px;
  }

  .toolbar button {
    height: 14px;
  }

  .grip {
    width: 1px;
    height: 1px;
    background: #888;
  }

  .toolbar .grip {
    margin-bottom: -2px;
  }

  .grid {
    flex: 1;
    min-width: 0;
    display: flex;
    flex-direction: column;
    margin-right: 4px;
    border: 1px solid #828790;
  }

  .view {
    flex: 1;
    min-height: 0;
    display: flex;
  }

  .scroll {
    position: relative;
    flex: 1;
    min-width: 0;
    overflow: hidden;
    background: #fff;
  }

  .wires {
    position: absolute;
    left: 0;
    top: 31px;
  }

  table {
    width: 100%;
    table-layout: fixed;
    border-collapse: separate;
    border-spacing: 0;
  }

  th {
    box-sizing: border-box;
    height: 31px;
    padding: 5px 0 0 4px;
    border-right: 1px solid #e5e5e5;
    border-bottom: 1px solid #e5e5e5;
    background: #fff;
    font-weight: normal;
    text-align: left;
  }

  td {
    box-sizing: border-box;
    height: 18px;
    padding: 2px 0 0 1px;
    border-right: 1px solid #808080;
    line-height: 16px;
  }

  th:last-child,
  td:last-child {
    border-right: 0;
  }

  .c-wire {
    width: 116px;
  }

  .c-name {
    width: 150px;
  }

  .c-desc {
    width: 281px;
  }

  .c-clock {
    width: 160px;
  }

  .c-base {
    width: 155px;
  }

  .contents tbody:nth-of-type(even) {
    background: #ececec;
  }

  .contents .current {
    background: #0078d7;
    color: #fff;
  }

  .contents td.module {
    padding: 0 0 0 5px;
  }

  .module div {
    display: flex;
    align-items: center;
  }

  .module svg + svg {
    margin-left: 4px;
  }

  .module b {
    margin-left: 7px;
    padding-top: 2px;
  }

  .module svg + svg + b {
    margin-left: 4px;
  }

  .contents td.port {
    padding-left: 30px;
  }

  .strong {
    font-size: 15px;
    font-weight: bold;
  }

  .italic {
    font-style: italic;
  }

  .contents td.hint {
    padding-top: 6px;
    color: #c8c8c8;
    font-style: italic;
    line-height: 12px;
  }

  .base svg {
    display: inline-block;
    margin: 0 11px 0 3px;
  }

  .filter {
    display: flex;
    align-items: center;
    gap: 5px;
    height: 28px;
    padding: 1px 0 0 34px;
  }

  .filter b {
    padding: 9px 0 0 1px;
  }

  .crumbs {
    display: flex;
    align-items: center;
    gap: 6px;
    height: 20px;
    padding-top: 1px;
    margin: 0 2px;
    border-bottom: 1px solid #828790;
  }

  .crumbs .path {
    margin-left: auto;
  }

  .banner {
    display: flex;
    justify-content: space-between;
    height: 51px;
    margin: 0 2px;
    padding: 0 7px 0 6px;
    background: linear-gradient(90deg, #fff 76%, #3f7fc0);
  }

  .banner div {
    padding-top: 10px;
  }

  .banner h2 {
    font-size: 15px;
    line-height: 20px;
  }

  .banner p {
    line-height: 18px;
  }

  .banner button {
    width: 87px;
    margin-top: 18px;
    outline: 1px solid #fff;
  }

  .form {
    flex: 1;
    margin: 0 2px 3px;
    padding: 5px 6px;
    border: 1px solid #828790;
  }

  h3 {
    display: flex;
    gap: 5px;
    height: 18px;
    padding-left: 2px;
    background: #b8cfe5;
    border: 1px solid #7a8a99;
    font-size: 15px;
    font-weight: bold;
    line-height: 24px;
  }

  h3 svg {
    margin-top: 6px;
  }

  .field {
    display: flex;
    gap: 8px;
    padding: 3px 0 0 12px;
  }

  .field label {
    padding-top: 2px;
  }

  .field input {
    box-sizing: border-box;
    width: 166px;
    height: 24px;
    padding: 0 3px;
    border: 1px solid #adadad;
    background: #f0f0f0;
    color: #6d6d6d;
    font: inherit;
  }

  .log {
    flex: 1;
    min-height: 0;
    display: flex;
    flex-direction: column;
    justify-content: space-between;
    border: 1px solid #828790;
    outline: 3px solid #99b4d1;
    margin: 2px 3px 3px 2px;
  }

  .log .hbar {
    border-top: 1px solid #fff;
  }

  .log .htrack {
    padding: 0 9px 0 1px;
  }

  .c-type {
    width: 75px;
  }

  .c-path {
    width: 194px;
  }

  .log th {
    padding: 6px 0 0 9px;
  }

  .log td {
    height: 22px;
    padding: 6px 0 0 2px;
    border-bottom: 1px solid #808080;
    background: #fff;
    color: #008000;
    line-height: 14px;
  }

  .log td:first-child {
    padding: 0 0 2px 24px;
  }

  .log .summary td {
    padding-top: 3px;
  }

  .log .summary td:first-child {
    padding: 0;
  }

  .summary div {
    display: flex;
    align-items: center;
    gap: 1px;
  }

  footer {
    flex: none;
    display: flex;
    gap: 6px;
    padding: 5px 7px 6px 6px;
  }

  output {
    flex: 1;
    height: 25px;
    padding-left: 16px;
    border: 1px solid #b4c8b4;
    background: #b4f5b4;
    line-height: 26px;
  }

  footer button {
    width: 138px;
    margin-top: 1px;
    padding: 0 6px;
    justify-content: flex-start;
  }

  footer .finish {
    width: 65px;
  }

  .ime {
    box-sizing: border-box;
    position: absolute;
    right: 0;
    bottom: 129px;
    width: 237px;
    height: 32px;
    padding-left: 12px;
    display: flex;
    align-items: center;
    justify-content: space-between;
    background: #fff;
    border-top: 1px solid #b8cde6;
    border-bottom: 1px solid #b8cde6;
    color: #0a6edc;
    font: bold 18px/20px "Noto Sans CJK SC", sans-serif;
  }

  .sogou {
    position: absolute;
    left: -35px;
    top: -6px;
  }

  .callout {
    position: absolute;
    right: 3px;
    bottom: 1px;
    width: 70px;
    height: 36px;
    border: 3px solid #f73131;
    pointer-events: none;
  }

  .watermark {
    position: absolute;
    right: 13px;
    bottom: 6px;
    color: #8c8c8c;
    opacity: 0.8;
    font: 18px/20px "Liberation Sans", sans-serif;
    pointer-events: none;
  }
</style>
